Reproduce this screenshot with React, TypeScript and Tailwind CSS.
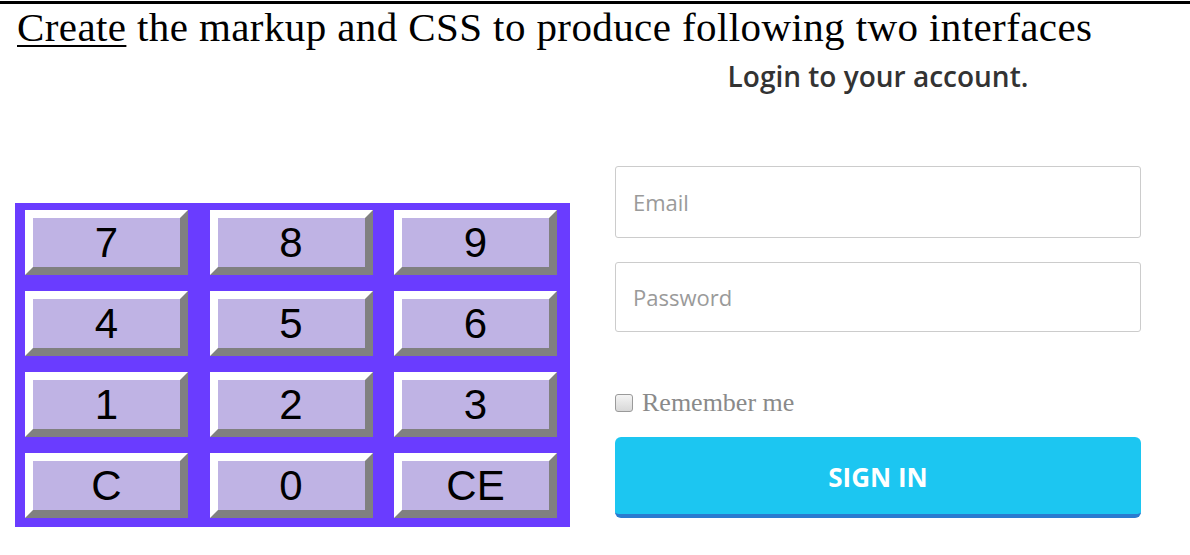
import React from "react";

const keys = ["7", "8", "9", "4", "5", "6", "1", "2", "3", "C", "0", "CE"];

export default function App() {
  return (
    <div className="w-[1190px] h-[555px] bg-white overflow-hidden">
      <div className="h-[3px] bg-black mt-[1px]" />
      <h1
        className="h-[46px] pl-[17px] text-[41px] leading-[46px] tracking-[0.4px] text-black whitespace-nowrap"
        style={{ fontFamily: '"Liberation Serif", serif' }}
      >
        <span className="underline decoration-2 underline-offset-[4px]">Create</span> the markup and CSS to produce following two interfaces
      </h1>
      <div className="flex items-start">
        <div className="ml-[15px] mt-[153px] bg-[#6a3cff] pl-[10px] pr-[13px] pt-[7px] pb-[9px] grid grid-cols-[163px_163px_163px] gap-x-[21.5px] gap-y-[16px]">
          {keys.map((k) => (
            <div
              key={k}
              className="h-[65px] border-8 border-t-white border-l-white border-b-[#808080] border-r-[#808080] bg-[#bfb3e4] flex items-center justify-center text-[42px] leading-none text-black"
              style={{ fontFamily: '"Liberation Sans", Arial, sans-serif' }}
            >
              {k}
            </div>
          ))}
        </div>
        <div
          className="ml-[45px] w-[526px] flex flex-col"
          style={{ fontFamily: '"Open Sans", Lato, sans-serif' }}
        >
          <div className="mt-[6px] text-center text-[28px] leading-[40px] font-semibold text-[#333333]">
            Login to your account.
          </div>
          <div className="mt-[70px] h-[72px] border border-[#cccccc] rounded-[3px] flex items-center pl-[17px] text-[22px] text-[#9a9a9a]">
            Email
          </div>
          <div className="mt-[24px] h-[70px] border border-[#cccccc] rounded-[3px] flex items-center pl-[17px] text-[22px] text-[#9a9a9a]">
            Password
          </div>
          <div className="mt-[59px] h-[24px] flex items-center">
            <div className="w-[18px] h-[18px] rounded-[3px] border border-[#9a9a9a] bg-gradient-to-b from-[#f4f4f4] to-[#d8d8d8]" />
            <span
              className="ml-[9px] text-[26px] leading-none text-[#8a8a8a]"
              style={{ fontFamily: '"Liberation Serif", serif' }}
            >
              Remember me
            </span>
          </div>
          <div className="mt-[22px] h-[81px] rounded-[6px] bg-[#1cc6f1] border-b-4 border-[#2a7bd0] flex items-center justify-center text-white font-bold text-[26px] pt-[3px]">
            SIGN IN
          </div>
        </div>
      </div>
    </div>
  );
}
